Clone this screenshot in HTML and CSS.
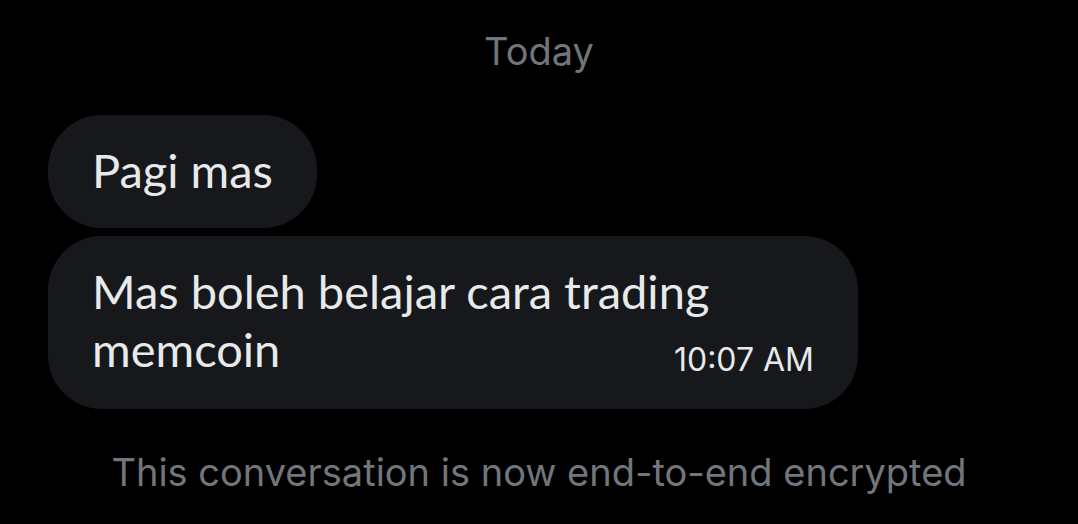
FILE: index.html
```html
<!DOCTYPE html>
<html lang="id">

<head>
  <meta charset="UTF-8">
  <meta name="viewport" content="width=device-width, initial-scale=1.0">
  <title>Chat</title>

  <link rel="stylesheet" href="styles.css">
</head>

<body>
  <main class="chat">
    <p class="day">Today</p>

    <div class="bubble short">Pagi mas</div>
    <div class="bubble long">
      <div>Mas boleh belajar cara trading</div>
      <div class="last">
        <span>memcoin</span>
        <time class="stamp" datetime="10:07">10:07 AM</time>
      </div>
    </div>

    <p class="notice">This conversation is now end-to-end encrypted</p>
  </main>
</body>

</html>
```

FILE: styles.css
```css
body {
  margin: 0;
  background: #000;
  font-family: Inter, "Liberation Sans", sans-serif;
}

.chat {
  display: flex;
  flex-direction: column;
  align-items: flex-start;
  padding: 28px 48px 0;
  height: 524px;
  box-sizing: border-box;
}

.day {
  align-self: center;
  margin: 0 0 41px;
  font-size: 38px;
  line-height: 46px;
  color: #71767b;
}

.bubble {
  background: #16181c;
  color: #e7e9ea;
  font-family: Lato, "Open Sans", sans-serif;
  font-size: 47px;
  line-height: 58px;
  border-radius: 54px;
  padding: 26px 44px 29px;
  box-sizing: border-box;
}

.short {
  margin-bottom: 8px;
}

.long {
  width: 810px;
  padding-bottom: 31px;
}

.last {
  display: flex;
  justify-content: space-between;
}

.stamp {
  align-self: flex-end;
  font-family: Inter, sans-serif;
  font-size: 32px;
  line-height: 36px;
  color: #e7e9ea;
}

.notice {
  align-self: center;
  margin: 40px 0 0;
  font-size: 38px;
  line-height: 46px;
  color: #71767b;
}
```
